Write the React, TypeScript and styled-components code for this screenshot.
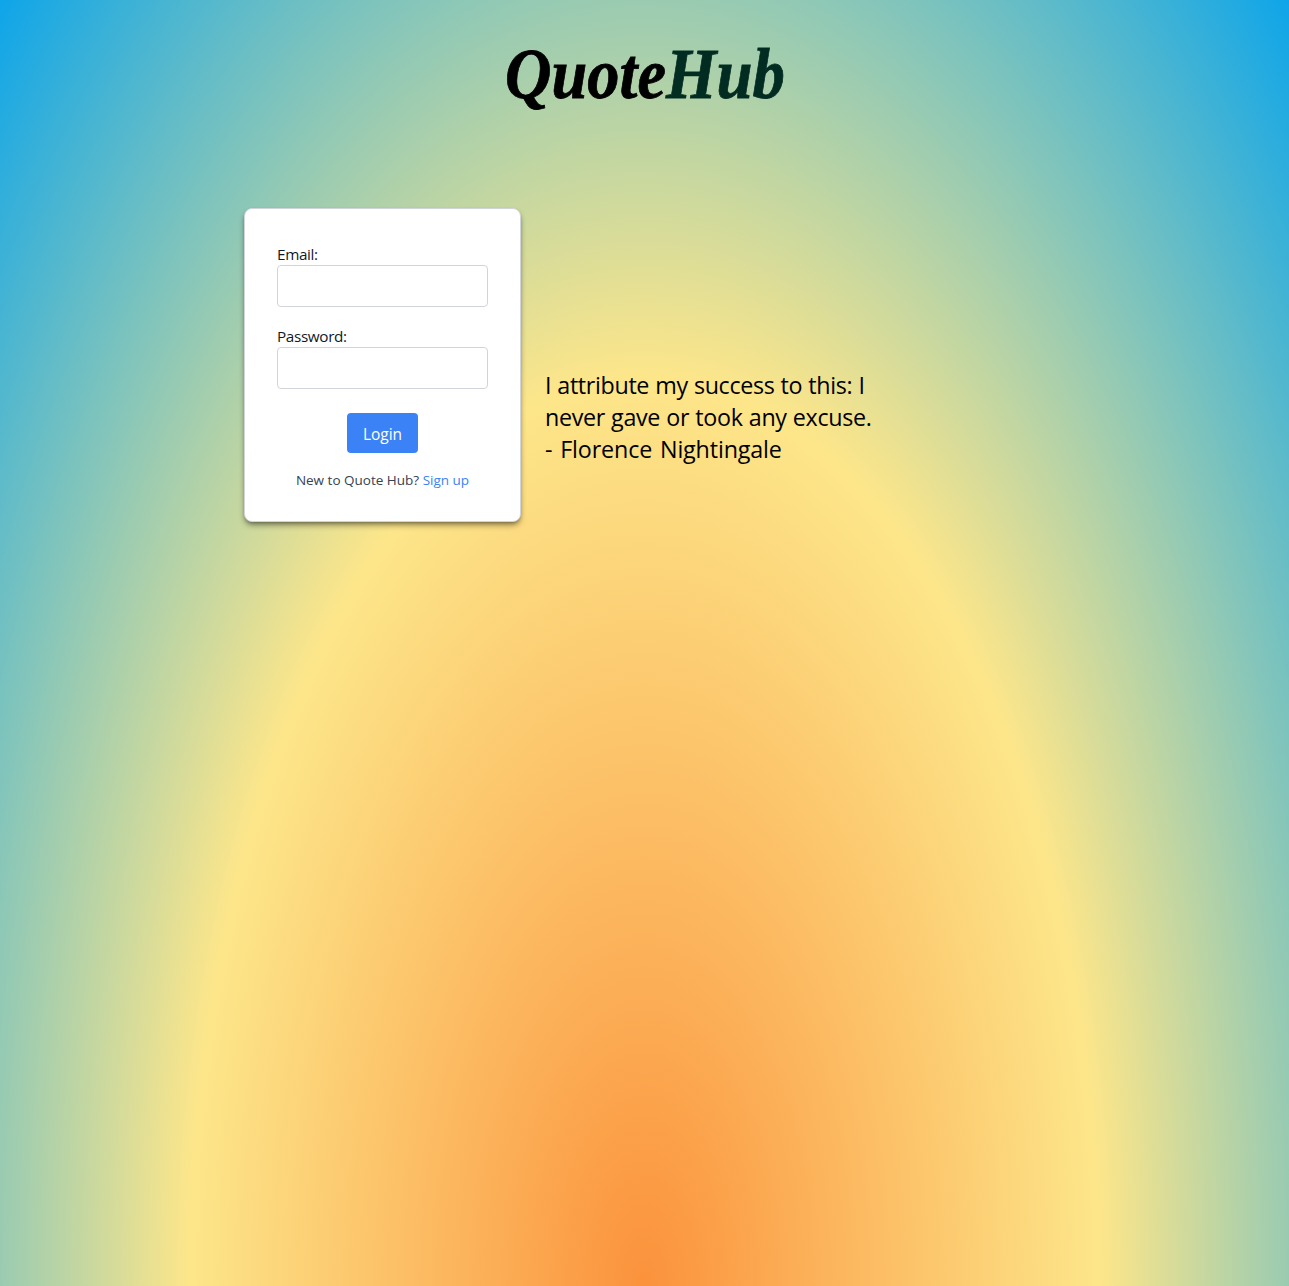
import React from "react";
import styled, { createGlobalStyle } from "styled-components";

const sans = '"Open Sans", "Noto Sans", sans-serif';

const Global = createGlobalStyle`
  *, *::before, *::after { box-sizing: border-box; }
  body { margin: 0; font-family: ${sans}; line-height: 24px; color: #000; }
`;

const Page = styled.main`
  display: flex;
  flex-direction: column;
  align-items: center;
  height: 100vh;
  overflow: hidden;
  background: radial-gradient(at center bottom, #fb923c, #fde68a, #0ea5e9);
`;

const Title = styled.h1`
  display: flex;
  width: 279px;
  margin: 38px 0 0;
  height: 72px;
  font: italic 700 72px/72px "Liberation Serif", serif;
  white-space: nowrap;
`;

const Part = styled.span<{ $color: string; $width: number; $stretch: number }>`
  display: block;
  flex: none;
  width: ${(p) => p.$width}px;
  color: ${(p) => p.$color};
  transform: scaleX(${(p) => p.$stretch});
  transform-origin: left center;
  -webkit-text-stroke: 0.8px currentColor;
`;

const Content = styled.div`
  display: grid;
  grid-template-columns: 277px 500px;
  column-gap: 24px;
  width: 801px;
  margin-top: 98px;
`;

const Card = styled.form`
  height: 314px;
  padding: 32px;
  background: #fff;
  border: 1px solid #d1d5db;
  border-radius: 8px;
  box-shadow: 0 4px 6px -1px rgba(0, 0, 0, 0.4), 0 2px 4px -2px rgba(0, 0, 0, 0.4);
`;

const Field = styled.label`
  display: block;
  height: 66px;
  margin-bottom: 16px;
  color: #111827;
`;

const Caption = styled.span`
  display: block;
  height: 24px;
  padding-top: 1px;
  font-size: 15.3px;
  letter-spacing: -0.36px;
`;

const Input = styled.input`
  display: block;
  width: 100%;
  height: 42px;
  padding: 8px;
  border: 1px solid #d1d5db;
  border-radius: 4px;
`;

const Actions = styled.div`
  display: flex;
  justify-content: center;
  margin-top: 24px;
`;

const Button = styled.button`
  width: 71px;
  height: 40px;
  padding: 2px 0 0;
  border: 0;
  border-radius: 4px;
  background: #3b82f6;
  color: #fff;
  font: 15.5px/24px ${sans};
`;

const Hint = styled.p`
  margin: 17px 0 0;
  text-align: center;
  white-space: nowrap;
  font-size: 13.5px;
  line-height: 20px;
  color: #374151;
`;

const Link = styled.a`
  color: #3b82f6;
`;

const Quote = styled.blockquote`
  margin: 161px 0 0;
  font-size: 23.3px;
  line-height: 32px;
  white-space: nowrap;
`;

const Line = styled.div<{ $spacing: number; $gap?: number }>`
  letter-spacing: ${(p) => p.$spacing}px;
  word-spacing: ${(p) => p.$gap ?? 0}px;
`;

export default function App() {
  return (
    <>
      <Global />
      <Page>
        <Title>
          <Part $color="#000" $width={161} $stretch={0.895}>Quote</Part>
          <Part $color="#022c22" $width={118} $stretch={0.9}>Hub</Part>
        </Title>
        <Content>
          <Card>
            <Field><Caption>Email:</Caption><Input type="email" /></Field>
            <Field><Caption>Password:</Caption><Input type="password" /></Field>
            <Actions><Button type="button">Login</Button></Actions>
            <Hint>New to Quote Hub? <Link>Sign up</Link></Hint>
          </Card>
          <Quote>
            <Line $spacing={-0.34} $gap={0.4}>I attribute my success to this: I</Line>
            <Line $spacing={-0.34} $gap={0.5}>never gave or took any excuse.</Line>
            <Line $spacing={-0.15} $gap={2}>- Florence Nightingale</Line>
          </Quote>
        </Content>
      </Page>
    </>
  );
}
